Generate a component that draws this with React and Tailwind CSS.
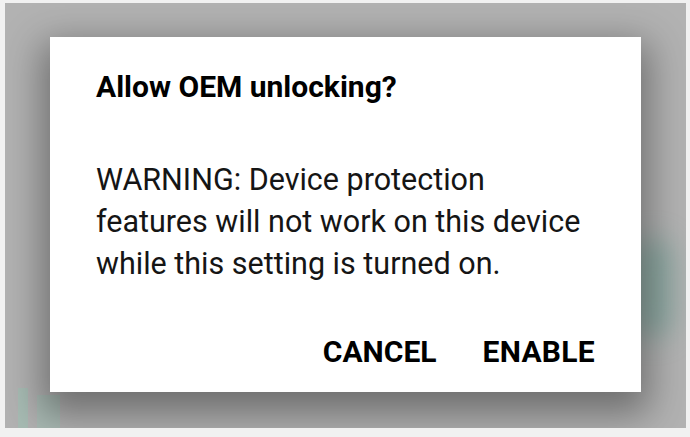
import React from 'react';

export default function App() {
  return (
    <div className="w-[690px] h-[437px] bg-[#f1f1f1] pt-[3px] pl-[5px] pr-[4px] pb-[9px] font-['Roboto',sans-serif]">
      <div className="relative w-full h-full bg-[#b2b2b2] overflow-hidden pl-[45px] pt-[34px]">
        {/* faint teal glow behind the dialog */}
        <div className="absolute left-[628px] top-[235px] w-[40px] h-[100px] rounded-full bg-[#5f9a8c] opacity-50 blur-[14px]" />
        {/* faint watermark */}
        <div className="absolute left-[13px] top-[385px] w-[10px] h-[42px] bg-[#9cc4b3] opacity-50" />
        <div className="absolute left-[32px] top-[392px] w-[23px] h-[35px] bg-[#9cc4b3] opacity-40" />

        <div className="relative w-[591px] h-[355px] bg-white shadow-[0_14px_36px_8px_rgba(0,0,0,0.38)] flex flex-col pl-[46px] pr-[46px]">
          <h2 className="mt-[32px] text-[30px] leading-[36px] font-bold text-black">Allow OEM unlocking?</h2>
          <p className="mt-[54px] w-[495px] text-[30.5px] leading-[42px] text-[#151515]">
            WARNING: Device protection features will not work on this device while this setting is turned on.
          </p>
          <div className="mt-auto mb-[22px] flex justify-end gap-[46px] text-[30px] leading-[36px] font-bold text-black">
            <span>CANCEL</span>
            <span className="tracking-[0.3px]">ENABLE</span>
          </div>
        </div>
      </div>
    </div>
  );
}
